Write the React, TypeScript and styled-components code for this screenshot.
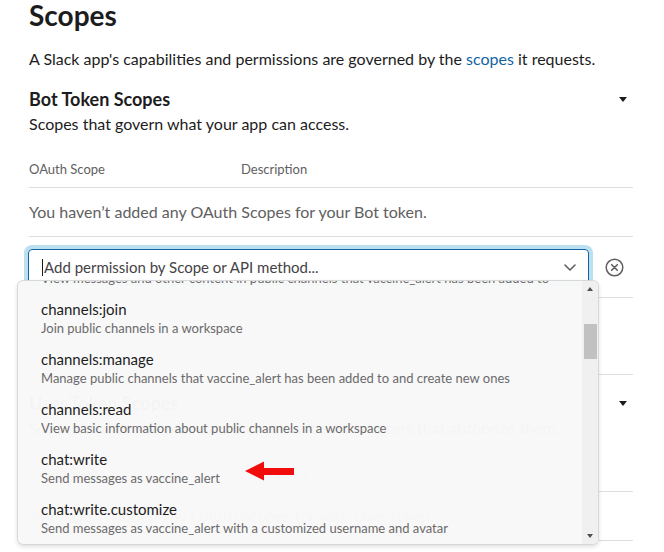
import React, { useLayoutEffect, useRef } from "react";
import styled, { createGlobalStyle } from "styled-components";

const GlobalStyle = createGlobalStyle`
  html, body { margin: 0; padding: 0; background: #ffffff; }
  body {
    font-family: Lato, "Noto Sans", sans-serif;
    color: #1d1c1d;
  }
  * { box-sizing: border-box; }
`;

const Page = styled.div`
  position: relative;
  width: 664px;
  height: 552px;
  overflow: hidden;
  padding: 0 31px 0 29px;
`;

const Title = styled.h1`
  margin: 0;
  font-size: 28px;
  line-height: 30px;
  font-weight: 700;
`;

const Intro = styled.p`
  margin: 18px 0 1px;
  font-size: 16px;
  line-height: 22px;
`;

const Link = styled.a`
  color: #1264a3;
  text-decoration: none;
`;

const Section = styled.section<{ $divided?: boolean }>`
  padding: 16px 0 76px;
  border-top: ${(p) => (p.$divided ? "1px solid #dddddd" : "none")};
`;

const SectionHeader = styled.div`
  display: flex;
  align-items: center;
  justify-content: space-between;
`;

const SectionTitle = styled.h2`
  margin: 0;
  font-size: 18px;
  line-height: 24px;
  font-weight: 700;
`;

const Disclosure = styled.span`
  width: 0;
  height: 0;
  margin-right: 6px;
  border-left: 4px solid transparent;
  border-right: 4px solid transparent;
  border-top: 5px solid #1d1c1d;
`;

const Subtitle = styled.p`
  margin: 2px 0 0;
  font-size: 16px;
  line-height: 22px;
`;

const Table = styled.div`
  margin-top: 17px;
`;

const HeaderRow = styled.div`
  display: grid;
  grid-template-columns: 212px 1fr;
  padding: 8px 0 9px;
  border-bottom: 1px solid #dddddd;
  font-size: 13px;
  line-height: 18px;
  color: #616061;
`;

const EmptyRow = styled.div`
  padding: 13px 0;
  border-bottom: 1px solid #dddddd;
  font-size: 16px;
  line-height: 22px;
  color: #616061;
`;

const InputRow = styled.div`
  position: relative;
  display: flex;
  align-items: center;
  gap: 16px;
  margin-left: -1px;
  padding: 12px 9px 12px 0;
  border-bottom: 1px solid #dddddd;
`;

const SelectBox = styled.div`
  flex: 1;
  height: 36px;
  display: flex;
  align-items: center;
  padding: 0 12px 0 13px;
  border: 1px solid #1264a3;
  border-radius: 4px;
  box-shadow: 0 0 0 4px rgba(29, 155, 209, 0.3);
  font-size: 15px;
  color: #454245;
`;

const TextCaret = styled.span`
  width: 1px;
  height: 17px;
  margin-right: 1px;
  background: #1d1c1d;
`;

const Placeholder = styled.span`
  flex: 1;
  white-space: nowrap;
`;

const IconSlot = styled.span`
  display: flex;
  align-items: center;
  justify-content: center;
  color: #616061;
`;

const Menu = styled.div`
  position: absolute;
  left: -11px;
  top: 43px;
  z-index: 5;
  width: 582px;
  height: 265px;
  display: flex;
  background: rgba(248, 248, 248, 0.985);
  border: 1px solid rgba(0, 0, 0, 0.13);
  border-radius: 6px;
  box-shadow: 0 2px 4px rgba(0, 0, 0, 0.12);
  overflow: hidden;
`;

const OptionList = styled.div`
  flex: 1;
  overflow: hidden;
`;

const Option = styled.div`
  position: relative;
  height: 50px;
  padding: 6px 23px;
  white-space: nowrap;
`;

const OptionName = styled.div`
  font-size: 15px;
  line-height: 20px;
  color: #1d1c1d;
`;

const OptionDesc = styled.div`
  font-size: 13px;
  line-height: 18px;
  color: #6b6a6b;
  overflow: hidden;
  text-overflow: ellipsis;
`;

const Scrollbar = styled.div`
  width: 16px;
  display: flex;
  flex-direction: column;
  background: #f0f0f0;
`;

const ScrollButton = styled.div<{ $down?: boolean }>`
  height: 16px;
  display: flex;
  align-items: center;
  justify-content: center;
  &::after {
    content: "";
    width: 0;
    height: 0;
    border-left: 3.5px solid transparent;
    border-right: 3.5px solid transparent;
    ${(p) =>
      p.$down ? "border-top: 4px solid #505050;" : "border-bottom: 4px solid #505050;"}
  }
`;

const Track = styled.div`
  flex: 1;
  display: flex;
  flex-direction: column;
  align-items: center;
`;

const Thumb = styled.div`
  width: 13px;
  height: 35px;
  background: #c1c1c1;
`;

const Annotation = styled.svg`
  position: absolute;
  left: 227px;
  top: 18px;
`;

const scopes: { name: string; desc: string; marked?: boolean }[] = [
  { name: "app_mentions:read", desc: "View messages that directly mention @vaccine_alert in conversations that the app is in" },
  { name: "calls:read", desc: "View information about ongoing and past calls" },
  { name: "calls:write", desc: "Start and manage calls in a workspace" },
  { name: "channels:history", desc: "View messages and other content in public channels that vaccine_alert has been added to" },
  { name: "channels:join", desc: "Join public channels in a workspace" },
  { name: "channels:manage", desc: "Manage public channels that vaccine_alert has been added to and create new ones" },
  { name: "channels:read", desc: "View basic information about public channels in a workspace" },
  { name: "chat:write", desc: "Send messages as vaccine_alert", marked: true },
  { name: "chat:write.customize", desc: "Send messages as vaccine_alert with a customized username and avatar" },
  { name: "chat:write.public", desc: "Send messages to channels vaccine_alert isn't a member of" },
  { name: "commands", desc: "Add shortcuts and/or slash commands that people can use" },
  { name: "dnd:read", desc: "View Do Not Disturb settings for people in a workspace" },
];

const SCROLL_TOP = 188;
const THUMB_OFFSET = 27;

function Chevron() {
  return (
    <svg width="12" height="7" viewBox="0 0 12 7" fill="none">
      <path d="M1 1l5 5 5-5" stroke="currentColor" strokeWidth="1.6" strokeLinecap="round" strokeLinejoin="round" />
    </svg>
  );
}

function ClearIcon() {
  return (
    <svg width="19" height="19" viewBox="0 0 19 19" fill="none">
      <circle cx="9.5" cy="9.5" r="8.3" stroke="currentColor" strokeWidth="1.5" />
      <path d="M6.7 6.7l5.6 5.6M12.3 6.7l-5.6 5.6" stroke="currentColor" strokeWidth="1.6" strokeLinecap="round" />
    </svg>
  );
}

function RedArrow() {
  return (
    <Annotation width="50" height="20" viewBox="0 0 50 20">
      <polygon points="0,10 19,0.5 19,7 49,7 49,14 19,14 19,19.5" fill="#f20d0d" />
    </Annotation>
  );
}

function ScopeSection({
  title,
  subtitle,
  token,
  divided,
  children,
}: {
  title: string;
  subtitle: string;
  token: string;
  divided?: boolean;
  children?: React.ReactNode;
}) {
  return (
    <Section $divided={divided}>
      <SectionHeader>
        <SectionTitle>{title}</SectionTitle>
        <Disclosure />
      </SectionHeader>
      <Subtitle>{subtitle}</Subtitle>
      <Table>
        <HeaderRow>
          <span>OAuth Scope</span>
          <span>Description</span>
        </HeaderRow>
        <EmptyRow>You haven’t added any OAuth Scopes for your {token} token.</EmptyRow>
        {children}
      </Table>
    </Section>
  );
}

export default function App() {
  const listRef = useRef<HTMLDivElement>(null);
  useLayoutEffect(() => {
    if (listRef.current) listRef.current.scrollTop = SCROLL_TOP;
  }, []);

  return (
    <>
      <GlobalStyle />
      <Page>
        <Title>Scopes</Title>
        <Intro>
          A Slack app's capabilities and permissions are governed by the <Link>scopes</Link> it requests.
        </Intro>
        <ScopeSection
          title="Bot Token Scopes"
          subtitle="Scopes that govern what your app can access."
          token="Bot"
        >
          <InputRow>
            <SelectBox>
              <TextCaret />
              <Placeholder>Add permission by Scope or API method...</Placeholder>
              <IconSlot>
                <Chevron />
              </IconSlot>
            </SelectBox>
            <IconSlot>
              <ClearIcon />
            </IconSlot>
            <Menu>
              <OptionList ref={listRef}>
                {scopes.map((s) => (
                  <Option key={s.name}>
                    <OptionName>{s.name}</OptionName>
                    <OptionDesc>{s.desc}</OptionDesc>
                    {s.marked && <RedArrow />}
                  </Option>
                ))}
              </OptionList>
              <Scrollbar>
                <ScrollButton />
                <Track>
                  <Thumb style={{ marginTop: THUMB_OFFSET }} />
                </Track>
                <ScrollButton $down />
              </Scrollbar>
            </Menu>
          </InputRow>
        </ScopeSection>
        <ScopeSection
          divided
          title="User Token Scopes"
          subtitle="Scopes that access user data and act on behalf of users that authorize them."
          token="User"
        />
      </Page>
    </>
  );
}
